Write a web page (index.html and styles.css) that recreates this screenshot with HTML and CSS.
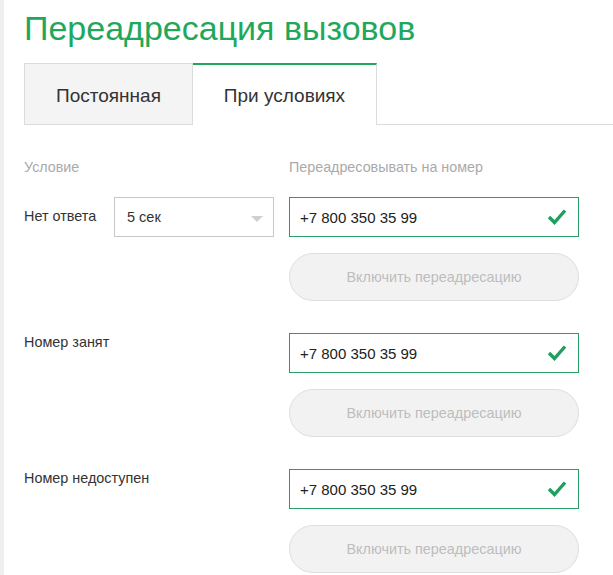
FILE: index.html
```html
<!DOCTYPE html>
<html lang="ru">
<head>
<meta charset="UTF-8">
<meta name="viewport" content="width=device-width, initial-scale=1.0">
<title>Переадресация вызовов</title>
<link rel="stylesheet" href="styles.css">
</head>
<body>
    <div class="page">
        <h1 class="title">Переадресация вызовов</h1>

        <div class="tabs">
            <div class="tab">Постоянная</div>
            <div class="tab tab-active">При условиях</div>
            <div class="tab-rest"></div>
        </div>

        <div class="form">
            <div class="form-head">
                <div class="head-left">Условие</div>
                <div class="head-right">Переадресовывать на номер</div>
            </div>

            <div class="row">
                <div class="row-left">
                    <span class="cond-label cond-label-mid">Нет ответа</span>
                    <div class="select">
                        <span>5 сек</span>
                        <span class="select-arrow"></span>
                    </div>
                </div>
                <div class="row-right">
                    <div class="phone">
                        <span>+7 800 350 35 99</span>
                        <svg class="check" width="20" height="17" viewBox="0 0 20 17"><path d="M2 9 L7.5 14.5 L18 2.5" fill="none" stroke="#1f9e5e" stroke-width="3.4"/></svg>
                    </div>
                    <button class="btn-enable">Включить переадресацию</button>
                </div>
            </div>

            <div class="row">
                <div class="row-left">
                    <span class="cond-label">Номер занят</span>
                </div>
                <div class="row-right">
                    <div class="phone">
                        <span>+7 800 350 35 99</span>
                        <svg class="check" width="20" height="17" viewBox="0 0 20 17"><path d="M2 9 L7.5 14.5 L18 2.5" fill="none" stroke="#1f9e5e" stroke-width="3.4"/></svg>
                    </div>
                    <button class="btn-enable">Включить переадресацию</button>
                </div>
            </div>

            <div class="row">
                <div class="row-left">
                    <span class="cond-label">Номер недоступен</span>
                </div>
                <div class="row-right">
                    <div class="phone">
                        <span>+7 800 350 35 99</span>
                        <svg class="check" width="20" height="17" viewBox="0 0 20 17"><path d="M2 9 L7.5 14.5 L18 2.5" fill="none" stroke="#1f9e5e" stroke-width="3.4"/></svg>
                    </div>
                    <button class="btn-enable">Включить переадресацию</button>
                </div>
            </div>
        </div>
    </div>
</body>
</html>
```

FILE: styles.css
```css
body {
    margin: 0;
    font-family: "Liberation Sans", Arial, sans-serif;
    color: #333;
    background-color: #fff;
    border-left: 4px solid #efefef;
    min-height: 575px;
}

.page {
    padding-left: 20px;
}

.title {
    margin: 0;
    padding-top: 5px;
    font-size: 34px;
    line-height: 46px;
    font-weight: normal;
    color: #1fa85c;
}

/* tabs */
.tabs {
    display: flex;
    margin-top: 12px;
    height: 62px;
}

.tab {
    box-sizing: border-box;
    display: flex;
    align-items: center;
    justify-content: center;
    height: 62px;
    font-size: 19px;
    color: #333;
    background-color: #f4f4f4;
    border: 1px solid #dcdcdc;
    width: 169px;
    padding-top: 4px;
}

.tab-active {
    width: 184px;
    background-color: #fff;
    border-top: 2px solid #1fa85c;
    border-left: none;
    border-bottom: none;
    border-right: 1px solid #dcdcdc;
    padding-top: 2px;
}

.tab-rest {
    flex: 1;
    border-bottom: 1px solid #dcdcdc;
}

/* form */
.form {
    padding-top: 34px;
}

.form-head {
    display: flex;
    font-size: 14.3px;
    color: #aaa;
    line-height: 16px;
}

.head-left {
    width: 265px;
}

.row {
    display: flex;
    margin-top: 22px;
}

.row + .row {
    margin-top: 32px;
}

.row-left {
    width: 265px;
    display: flex;
    align-items: flex-start;
}

.cond-label {
    width: 90px;
    white-space: nowrap;
    font-size: 14.4px;
    line-height: 16px;
    padding-top: 1px;
    color: #333;
}

.cond-label-mid {
    padding-top: 11px;
}

.select {
    box-sizing: border-box;
    width: 160px;
    height: 40px;
    border: 1px solid #c8c8c8;
    display: flex;
    align-items: center;
    justify-content: space-between;
    padding: 0 10px 0 12px;
    font-size: 14.5px;
    color: #333;
}

.select-arrow {
    width: 0;
    height: 0;
    border-left: 6px solid transparent;
    border-right: 6px solid transparent;
    border-top: 6px solid #d0d0d0;
    margin-top: 3px;
}

.row-right {
    width: 290px;
    display: flex;
    flex-direction: column;
    gap: 16px;
}

.phone {
    box-sizing: border-box;
    height: 40px;
    border: 1px solid #2a9d66;
    display: flex;
    align-items: center;
    justify-content: space-between;
    padding: 0 11px 0 10px;
    font-size: 15px;
    color: #222;
}

.check {
    margin-top: -2px;
}

.btn-enable {
    height: 48px;
    border-radius: 24px;
    border: 1px solid #dedede;
    background-color: #f2f2f2;
    color: #bdbdbd;
    font-family: "Liberation Sans", Arial, sans-serif;
    font-size: 14.4px;
    cursor: default;
}
```
